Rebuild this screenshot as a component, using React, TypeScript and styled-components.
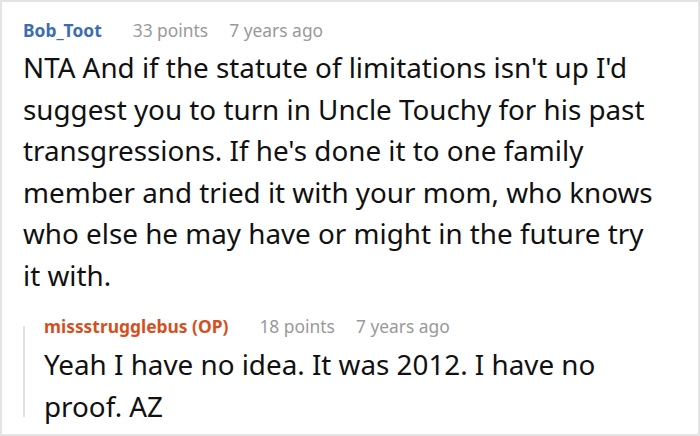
import React from 'react';
import styled, { createGlobalStyle } from 'styled-components';

const Global = createGlobalStyle`
  html, body {
    margin: 0;
    padding: 0;
    background: #fff;
  }
  body {
    font-family: "Noto Sans", "Open Sans", Arial, sans-serif;
  }
`;

const Card = styled.div`
  width: 700px;
  height: 436px;
  box-sizing: border-box;
  border: 2px solid #e4e4e4;
  padding: 14px 17px 0 21px;
  overflow: hidden;
`;

const Meta = styled.div`
  display: flex;
  align-items: baseline;
  font-size: 17.4px;
  line-height: 28px;
  margin-bottom: 3px;
`;

const Author = styled.span<{ $op?: boolean }>`
  font-weight: 700;
  color: ${p => (p.$op ? '#d4511f' : '#3c6db3')};
  margin-right: 31px;
`;

const Faded = styled.span`
  color: #999;
  margin-right: 21px;
`;

const Body = styled.p<{ $lh?: number }>`
  margin: 0;
  font-size: 27.8px;
  line-height: ${p => p.$lh ?? 41.6}px;
  color: #111;
`;

const Reply = styled.div`
  position: relative;
  margin-top: 15px;
  padding-left: 21px;
  margin-right: 20px;

  &::before {
    content: '';
    position: absolute;
    left: 0;
    top: 14px;
    bottom: 10px;
    width: 2px;
    background: #e2e2e2;
  }
`;

type CommentProps = {
  author: string;
  points: number;
  age: string;
  op?: boolean;
};

function Header({ author, points, age, op }: CommentProps) {
  return (
    <Meta>
      <Author $op={op}>{author}</Author>
      <Faded>{points} points</Faded>
      <Faded>{age}</Faded>
    </Meta>
  );
}

export default function App() {
  return (
    <>
      <Global />
      <Card>
        <Header author="Bob_Toot" points={33} age="7 years ago" />
        <Body>
          NTA And if the statute of limitations isn't up I'd suggest you to turn in Uncle Touchy for his past
          transgressions. If he's done it to one family member and tried it with your mom, who knows who else
          he may have or might in the future try
          <br />
          it with.
        </Body>
        <Reply>
          <Header author="missstrugglebus (OP)" points={18} age="7 years ago" op />
          <Body $lh={42}>Yeah I have no idea. It was 2012. I have no proof. AZ</Body>
        </Reply>
      </Card>
    </>
  );
}
